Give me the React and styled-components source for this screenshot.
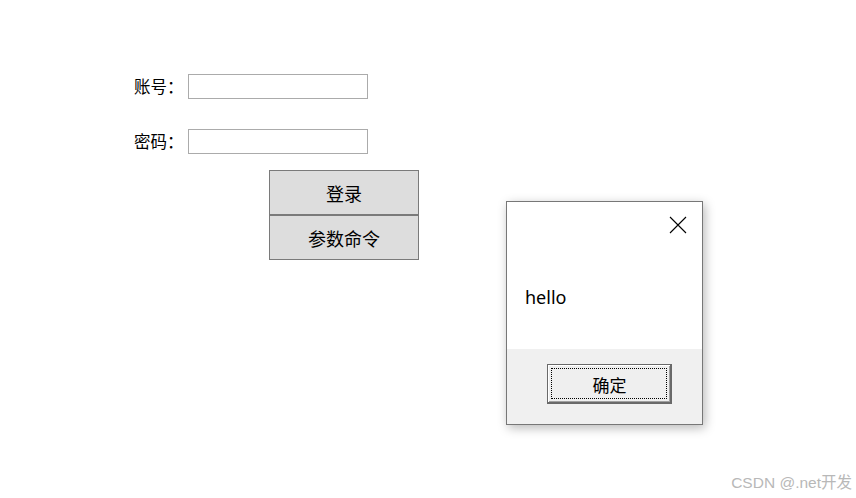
import React from "react";
import styled, { createGlobalStyle } from "styled-components";

const GlobalStyle = createGlobalStyle`
  html, body {
    margin: 0;
    padding: 0;
    background: #ffffff;
  }
  body {
    font-family: "Noto Sans CJK SC", "Noto Sans", sans-serif;
    color: #000;
  }
`;

const Page = styled.div`
  position: relative;
  width: 856px;
  height: 498px;
  overflow: hidden;
  background: #ffffff;
`;

const LoginForm = styled.div`
  display: flex;
  flex-direction: column;
  padding: 74px 0 0 134px;
`;

const Field = styled.div`
  display: flex;
  align-items: center;
  height: 25px;
  margin-bottom: ${(p) => p.$gap}px;
`;

const Label = styled.span`
  width: 54px;
  font-size: 16.5px;
  line-height: 25px;
  white-space: nowrap;
`;

const TextBox = styled.input`
  box-sizing: border-box;
  width: 180px;
  height: 25px;
  margin: 0;
  border: 1px solid #ababab;
  background: #fff;
  outline: none;
`;

const ButtonStack = styled.div`
  display: flex;
  flex-direction: column;
  margin-left: 135px;
  width: 150px;
`;

const FormButton = styled.button`
  box-sizing: border-box;
  width: 150px;
  height: 45px;
  margin: 0;
  padding: 0;
  border: 1px solid #7a7a7a;
  background: #dddddd;
  font-family: "Noto Sans CJK SC", sans-serif;
  font-size: 18px;
  color: #000;
`;

const Dialog = styled.div`
  position: absolute;
  left: 506px;
  top: 201px;
  box-sizing: border-box;
  width: 197px;
  height: 224px;
  border: 1px solid #777777;
  background: #f0f0f0;
  display: flex;
  flex-direction: column;
  box-shadow: 2px 3px 10px rgba(0, 0, 0, 0.28);
`;

const DialogBody = styled.div`
  position: relative;
  height: 147px;
  background: #ffffff;
  display: flex;
  align-items: center;
  padding: 0 18px;
`;

const Message = styled.span`
  font-family: "Segoe UI", "Noto Sans", sans-serif;
  font-size: 18px;
  margin-top: 43px;
`;

const CloseButton = styled.div`
  position: absolute;
  right: 15px;
  top: 14px;
  width: 18px;
  height: 18px;
  display: flex;
`;

const DialogFooter = styled.div`
  flex: 1;
  display: flex;
  justify-content: flex-start;
  align-items: flex-start;
  padding-top: 15px;
  padding-left: 40px;
`;

const OkButton = styled.button`
  position: relative;
  box-sizing: border-box;
  width: 125px;
  height: 40px;
  margin: 0;
  padding: 0;
  border: 1px solid #696969;
  background: #efefef;
  box-shadow: inset -1px -1px 0 #6a6a6a, inset 1px 1px 0 #ffffff, inset -2px -2px 0 #a0a0a0;
  font-family: "Noto Sans CJK SC", sans-serif;
  font-size: 17px;
  color: #000;
  &::after {
    content: "";
    position: absolute;
    left: 3px;
    top: 3px;
    right: 4px;
    bottom: 4px;
    border: 1px dotted #000;
  }
`;

const Watermark = styled.span`
  position: absolute;
  right: 4px;
  bottom: 6px;
  font-family: "Liberation Sans", "Noto Sans CJK SC", sans-serif;
  font-size: 15.5px;
  color: #b8b8b8;
`;

export default function App() {
  return (
    <Page>
      <GlobalStyle />
      <LoginForm>
        <Field $gap={30}>
          <Label>账号：</Label>
          <TextBox type="text" />
        </Field>
        <Field $gap={16}>
          <Label>密码：</Label>
          <TextBox type="password" />
        </Field>
        <ButtonStack>
          <FormButton>登录</FormButton>
          <FormButton>参数命令</FormButton>
        </ButtonStack>
      </LoginForm>

      <Dialog>
        <DialogBody>
          <CloseButton>
            <svg width="18" height="18" viewBox="0 0 18 18">
              <path d="M1 1 L17 17 M17 1 L1 17" stroke="#000" strokeWidth="1.1" fill="none" />
            </svg>
          </CloseButton>
          <Message>hello</Message>
        </DialogBody>
        <DialogFooter>
          <OkButton>确定</OkButton>
        </DialogFooter>
      </Dialog>

      <Watermark>CSDN @.net开发</Watermark>
    </Page>
  );
}
